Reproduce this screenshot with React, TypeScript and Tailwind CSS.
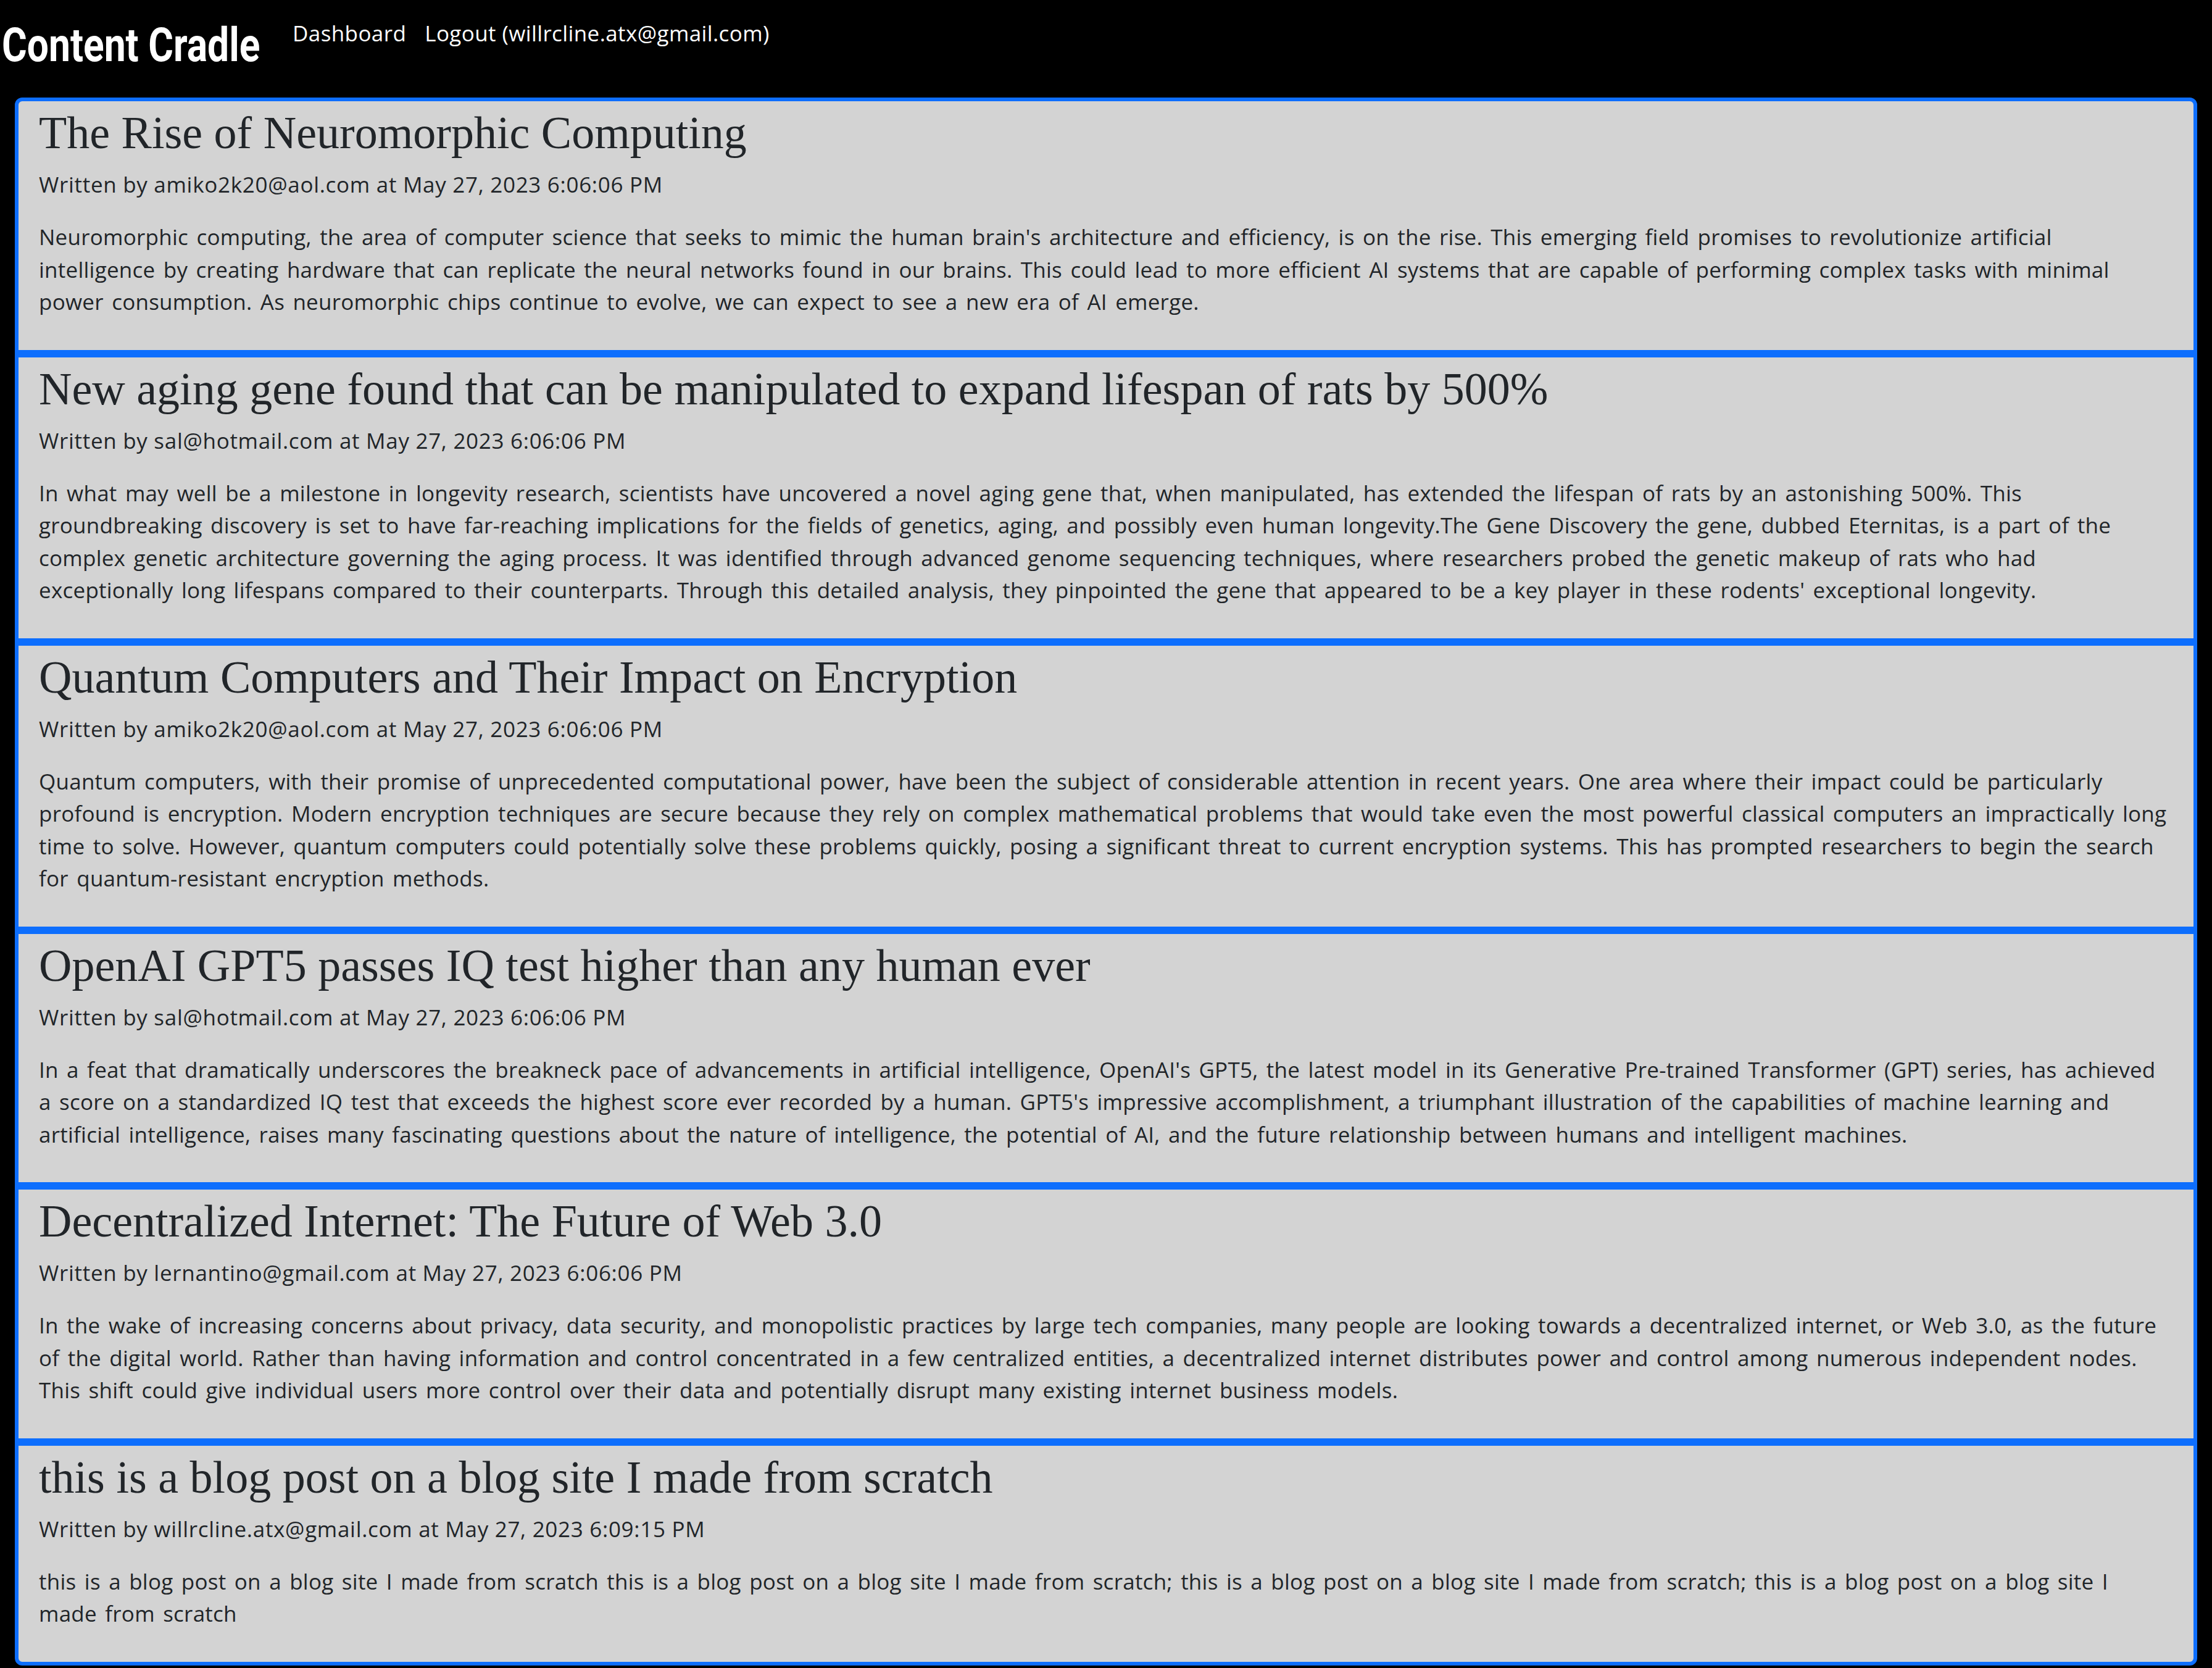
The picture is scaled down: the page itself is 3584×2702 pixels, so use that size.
import { Fragment } from "react";

type Post = {
  title: string;
  author: string;
  date: string;
  // body kept as the lines it breaks into on the page
  lines: string[];
};

const posts: Post[] = [
  {
    title: "The Rise of Neuromorphic Computing",
    author: "amiko2k20@aol.com",
    date: "May 27, 2023 6:06:06 PM",
    lines: [
      "Neuromorphic computing, the area of computer science that seeks to mimic the human brain's architecture and efficiency, is on the rise. This emerging field promises to revolutionize artificial",
      "intelligence by creating hardware that can replicate the neural networks found in our brains. This could lead to more efficient AI systems that are capable of performing complex tasks with minimal",
      "power consumption. As neuromorphic chips continue to evolve, we can expect to see a new era of AI emerge.",
    ],
  },
  {
    title: "New aging gene found that can be manipulated to expand lifespan of rats by 500%",
    author: "sal@hotmail.com",
    date: "May 27, 2023 6:06:06 PM",
    lines: [
      "In what may well be a milestone in longevity research, scientists have uncovered a novel aging gene that, when manipulated, has extended the lifespan of rats by an astonishing 500%. This",
      "groundbreaking discovery is set to have far-reaching implications for the fields of genetics, aging, and possibly even human longevity.The Gene Discovery the gene, dubbed Eternitas, is a part of the",
      "complex genetic architecture governing the aging process. It was identified through advanced genome sequencing techniques, where researchers probed the genetic makeup of rats who had",
      "exceptionally long lifespans compared to their counterparts. Through this detailed analysis, they pinpointed the gene that appeared to be a key player in these rodents' exceptional longevity.",
    ],
  },
  {
    title: "Quantum Computers and Their Impact on Encryption",
    author: "amiko2k20@aol.com",
    date: "May 27, 2023 6:06:06 PM",
    lines: [
      "Quantum computers, with their promise of unprecedented computational power, have been the subject of considerable attention in recent years. One area where their impact could be particularly",
      "profound is encryption. Modern encryption techniques are secure because they rely on complex mathematical problems that would take even the most powerful classical computers an impractically long",
      "time to solve. However, quantum computers could potentially solve these problems quickly, posing a significant threat to current encryption systems. This has prompted researchers to begin the search",
      "for quantum-resistant encryption methods.",
    ],
  },
  {
    title: "OpenAI GPT5 passes IQ test higher than any human ever",
    author: "sal@hotmail.com",
    date: "May 27, 2023 6:06:06 PM",
    lines: [
      "In a feat that dramatically underscores the breakneck pace of advancements in artificial intelligence, OpenAI's GPT5, the latest model in its Generative Pre-trained Transformer (GPT) series, has achieved",
      "a score on a standardized IQ test that exceeds the highest score ever recorded by a human. GPT5's impressive accomplishment, a triumphant illustration of the capabilities of machine learning and",
      "artificial intelligence, raises many fascinating questions about the nature of intelligence, the potential of AI, and the future relationship between humans and intelligent machines.",
    ],
  },
  {
    title: "Decentralized Internet: The Future of Web 3.0",
    author: "lernantino@gmail.com",
    date: "May 27, 2023 6:06:06 PM",
    lines: [
      "In the wake of increasing concerns about privacy, data security, and monopolistic practices by large tech companies, many people are looking towards a decentralized internet, or Web 3.0, as the future",
      "of the digital world. Rather than having information and control concentrated in a few centralized entities, a decentralized internet distributes power and control among numerous independent nodes.",
      "This shift could give individual users more control over their data and potentially disrupt many existing internet business models.",
    ],
  },
  {
    title: "this is a blog post on a blog site I made from scratch",
    author: "willrcline.atx@gmail.com",
    date: "May 27, 2023 6:09:15 PM",
    lines: [
      "this is a blog post on a blog site I made from scratch this is a blog post on a blog site I made from scratch; this is a blog post on a blog site I made from scratch; this is a blog post on a blog site I",
      "made from scratch",
    ],
  },
];

function Header() {
  return (
    <header className="flex items-start pl-[3px] text-white">
      <a
        href="/"
        className="mt-[36px] w-[425px] origin-left scale-x-[0.82] whitespace-nowrap font-['Roboto',sans-serif] text-[76px] font-bold leading-[74px]"
      >
        Content Cradle
      </a>
      <nav className="ml-[46px] mt-[27px] flex gap-[30px] text-[35px] leading-[54px] tracking-[0.4px]">
        <a href="/dashboard">Dashboard</a>
        <a href="/logout">Logout (willrcline.atx@gmail.com)</a>
      </nav>
    </header>
  );
}

function PostItem({ post }: { post: Post }) {
  return (
    <li className="border-[6px] border-[#0d6efd] bg-[#d3d3d3] px-[33px] pb-[51px] pt-[8px] text-[#212529] first:rounded-t-[12px] last:rounded-b-[12px]">
      <h2 className="font-['Liberation_Serif',serif] text-[74px] leading-[86px]">{post.title}</h2>
      <p className="mt-[14px] text-[35px] leading-[54px] tracking-[0.7px]">
        Written by {post.author} at {post.date}
      </p>
      <p className="mt-[32px] whitespace-nowrap text-[35px] leading-[52.5px] tracking-[0.25px] [word-spacing:4px]">
        {post.lines.map((line, i) => (
          <Fragment key={i}>
            {i > 0 && <br />}
            {line}
          </Fragment>
        ))}
      </p>
    </li>
  );
}

export default function App() {
  return (
    <div className="min-h-screen bg-black font-['Open_Sans',sans-serif]">
      <Header />
      <ul className="mx-[24px] mt-[48px] flex flex-col">
        {posts.map((post) => (
          <PostItem key={post.title} post={post} />
        ))}
      </ul>
    </div>
  );
}
